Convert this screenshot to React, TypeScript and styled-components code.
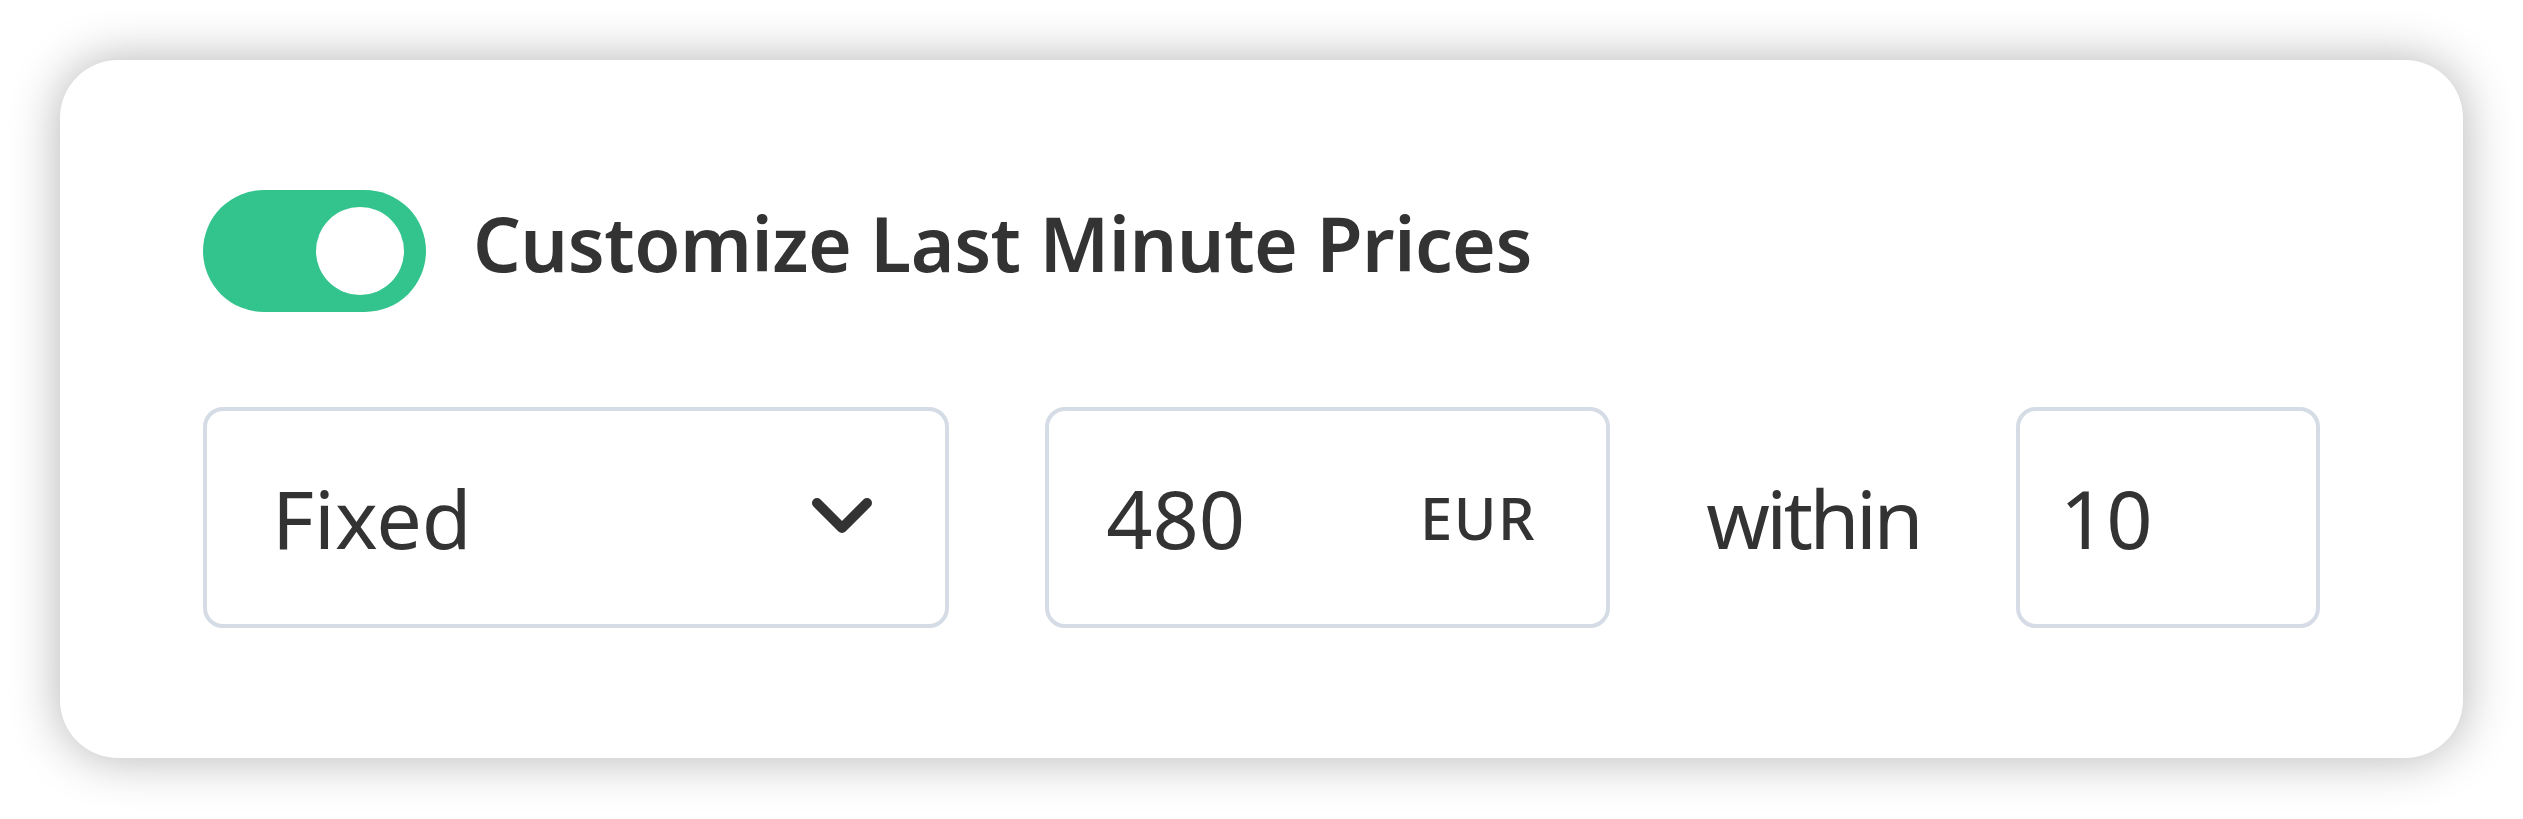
import styled, { createGlobalStyle } from 'styled-components';

const GlobalStyle = createGlobalStyle`
  * { box-sizing: border-box; }
  body {
    margin: 0;
    background: #ffffff;
    font-family: 'Noto Sans', 'Liberation Sans', sans-serif;
    color: #333333;
  }
`;

export default function App() {
  return (
    <>
      <GlobalStyle />
      <Page>
        <Card>
          <Header>
            <Toggle role="switch" aria-checked="true">
              <Knob />
            </Toggle>
            <Title>Customize Last Minute Prices</Title>
          </Header>
          <Row>
            <Field $grow $padLeft={65}>
              <Value>Fixed</Value>
              <Chevron viewBox="0 0 62 42" width={62} height={42}>
                <path
                  d="M6 6 L31 31 L56 6"
                  fill="none"
                  stroke="#333"
                  strokeWidth={10}
                  strokeLinecap="round"
                  strokeLinejoin="round"
                />
              </Chevron>
            </Field>
            <Field $width={565} $padLeft={57} $padRight={70}>
              <Value>480</Value>
              <Unit>EUR</Unit>
            </Field>
            <Label>within</Label>
            <Field $width={304} $padLeft={40}>
              <Value>10</Value>
            </Field>
          </Row>
        </Card>
      </Page>
    </>
  );
}

const Page = styled.div`
  padding: 60px;
`;

const Card = styled.div`
  width: 2403px;
  height: 698px;
  padding: 130px 143px;
  background: #ffffff;
  border-radius: 58px;
  box-shadow: 0 0 50px rgba(0, 0, 0, 0.3);
`;

const Header = styled.div`
  display: flex;
  align-items: center;
  gap: 47px;
`;

const Toggle = styled.div`
  display: flex;
  align-items: center;
  justify-content: flex-end;
  width: 223px;
  height: 122px;
  padding-right: 22px;
  border-radius: 61px;
  background: #33c48e;
  flex-shrink: 0;
`;

const Knob = styled.div`
  width: 88px;
  height: 88px;
  border-radius: 50%;
  background: #ffffff;
`;

const Title = styled.h1`
  margin: 0 0 16px;
  font-size: 75px;
  font-weight: 600;
  line-height: 1;
  letter-spacing: -0.5px;
`;

const Row = styled.div`
  display: flex;
  align-items: center;
  gap: 96px;
  margin-top: 95px;
`;

const Field = styled.div<{ $grow?: boolean; $width?: number; $padLeft?: number; $padRight?: number }>`
  display: flex;
  align-items: center;
  justify-content: space-between;
  height: 221px;
  ${(p) => (p.$grow ? 'flex: 1;' : `width: ${p.$width}px; flex-shrink: 0;`)}
  padding-left: ${(p) => p.$padLeft ?? 73}px;
  padding-right: ${(p) => p.$padRight ?? 72}px;
  border: 4px solid #d5dce6;
  border-radius: 20px;
`;

const Value = styled.span`
  font-size: 81px;
  font-weight: 400;
  line-height: 1;
`;

const Unit = styled.span`
  font-size: 58px;
  font-weight: 500;
  line-height: 1;
  letter-spacing: 1.5px;
`;

const Label = styled.span`
  font-size: 81px;
  line-height: 1;
  letter-spacing: -3.5px;
`;

const Chevron = styled.svg`
  display: block;
  flex-shrink: 0;
`;
